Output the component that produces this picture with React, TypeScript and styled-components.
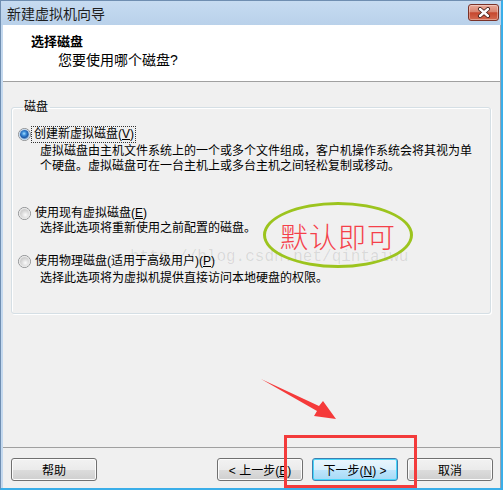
import styled, { createGlobalStyle } from 'styled-components';

const GlobalStyle = createGlobalStyle`
  html, body {
    margin: 0;
    padding: 0;
    background: #f0f0f0;
  }
  body {
    font-family: "Liberation Sans", "Noto Sans CJK SC", sans-serif;
    font-size: 12px;
    color: #000;
  }
`;

const CJK = `"Liberation Sans", "Noto Sans CJK SC", sans-serif`;

const Window = styled.div`
  position: relative;
  width: 503px;
  height: 490px;
  box-sizing: border-box;
  display: flex;
  flex-direction: column;
  background: #c4d9ef;
  border-left: 1px solid #6f8eb1;
  border-top: 1px solid #6f8eb1;
  border-right: 2px solid #3aaee9;
  border-bottom: 2px solid #3aaee9;
  overflow: hidden;
`;

const TitleBar = styled.div`
  height: 24px;
  flex-shrink: 0;
  display: flex;
  align-items: center;
  padding-left: 6px;
  background: linear-gradient(to bottom, #c6dbf1 0%, #b9d1ea 100%);
`;

const TitleText = styled.span`
  font-family: ${CJK};
  font-size: 14px;
  color: #1e1e1e;
`;

const CloseButton = styled.div`
  width: 31px;
  height: 17px;
  margin: 3px 2px 0 auto;
  align-self: flex-start;
  box-sizing: border-box;
  border: 1px solid #7a3228;
  border-radius: 3px;
  background: linear-gradient(to bottom, #e9a998 0%, #d88470 45%, #c6472f 52%, #d36a50 100%);
  box-shadow: inset 0 0 0 1px rgba(255, 255, 255, 0.35);
  display: flex;
  align-items: center;
  justify-content: center;
`;

const Client = styled.div`
  flex: 1;
  display: flex;
  flex-direction: column;
  margin: 0 0 0 2px;
  background: #f0f0f0;
  border-right: 1px solid #9aa6b2;
`;

const Header = styled.div`
  height: 57px;
  flex-shrink: 0;
  box-sizing: border-box;
  background: #fff;
  border-bottom: 1px solid #a0a0a0;
  padding: 9px 0 0 28px;
  display: flex;
  flex-direction: column;
`;

const HeaderTitle = styled.div`
  font-family: ${CJK};
  font-size: 13px;
  font-weight: bold;
  line-height: 16px;
`;

const HeaderSub = styled.div`
  font-family: ${CJK};
  font-size: 14px;
  line-height: 18px;
  margin: 1px 0 0 27px;
`;

const Body = styled.div`
  flex: 1;
  display: flex;
  flex-direction: column;
`;

const GroupBox = styled.fieldset`
  margin: 17px 9px 0 8px;
  padding: 0 0 0 6px;
  height: 215px;
  box-sizing: border-box;
  min-width: 0;
  border: 1px solid #d5dfe5;
  border-radius: 3px;
  box-shadow: inset 1px 1px 0 #fff, 1px 1px 0 #fff;
`;

const Legend = styled.legend`
  margin-left: 5px;
  padding: 0 2px 0 1px;
  font-family: ${CJK};
  font-size: 12px;
  line-height: 16px;
`;

const Option = styled.div<{ $top: number }>`
  display: flex;
  flex-direction: column;
  margin-top: ${(p) => p.$top}px;
`;

const RadioRow = styled.div`
  display: flex;
  align-items: center;
  height: 16px;
`;

const Radio = styled.span<{ $checked?: boolean }>`
  position: relative;
  width: 13px;
  height: 13px;
  flex-shrink: 0;
  box-sizing: border-box;
  border-radius: 50%;
  border: 1px solid #8c8e90;
  background: #f4f4f4;
  &::after {
    content: '';
    position: absolute;
    left: 1px;
    top: 1px;
    width: 9px;
    height: 9px;
    border-radius: 50%;
    background: ${(p) =>
      p.$checked
        ? 'radial-gradient(circle at 45% 40%, #a8e0ff 0, #3d8fdc 2px, #1d5aa8 4px, #5c8fc6 5px)'
        : 'radial-gradient(circle at 60% 65%, #fbfbfb 0, #e0e0e0 3px, #cfcfcf 5px)'};
    box-shadow: ${(p) => (p.$checked ? '0 0 0 1px #bcd4ec' : '0 0 0 1px #e7e7e7')};
  }
`;

const RadioLabel = styled.span<{ $focused?: boolean }>`
  margin-left: ${(p) => (p.$focused ? '1px' : '4px')};
  padding: ${(p) => (p.$focused ? '0 1px 0 2px' : '0')};
  font-family: ${CJK};
  font-size: 12px;
  line-height: 15px;
  white-space: nowrap;
  outline: ${(p) => (p.$focused ? '1px dotted #333' : 'none')};
  outline-offset: 0;
`;

const Key = styled.span`
  text-decoration: underline;
`;

const Description = styled.div<{ $gap: number }>`
  margin: ${(p) => p.$gap}px 0 0 22px;
  font-family: ${CJK};
  font-size: 12px;
  line-height: 15px;
  white-space: nowrap;
`;

const Footer = styled.div`
  flex-shrink: 0;
  height: 41px;
  box-sizing: border-box;
  border-top: 1px solid #a0a0a0;
  padding: 10px 7px 0 8px;
  display: flex;
  align-items: flex-start;
  gap: 9px;
`;

const Spacer = styled.div`
  flex: 1;
`;

const Button = styled.button<{ $default?: boolean }>`
  width: 86px;
  height: 23px;
  box-sizing: border-box;
  padding: 0;
  border: 1px solid ${(p) => (p.$default ? '#3c7fb1' : '#707070')};
  border-radius: 3px;
  background: ${(p) =>
    p.$default
      ? 'linear-gradient(to bottom, #eaf6fd 0%, #d9f0fc 50%, #bee6fd 50%, #a7d9f5 100%)'
      : 'linear-gradient(to bottom, #f2f2f2 0%, #ebebeb 50%, #dddddd 50%, #cfcfcf 100%)'};
  box-shadow: inset 0 0 0 1px ${(p) => (p.$default ? '#48d7fb' : '#fcfcfc')};
  font-family: ${CJK};
  font-size: 12px;
  color: #000;
`;

const Watermark = styled.div`
  position: absolute;
  left: 129px;
  top: 247px;
  font-family: "Liberation Mono", monospace;
  font-size: 16px;
  line-height: 18px;
  color: rgba(0, 0, 0, 0.1);
  pointer-events: none;
`;

const Stamp = styled.div`
  position: absolute;
  left: 262px;
  top: 201px;
  width: 150px;
  height: 66px;
  box-sizing: border-box;
  border: 3px solid #9cc41e;
  border-radius: 50%;
  display: flex;
  align-items: center;
  justify-content: center;
  padding-top: 1px;
`;

const StampText = styled.span`
  font-family: "Noto Sans CJK SC", sans-serif;
  font-size: 28px;
  font-weight: 300;
  line-height: 30px;
  color: #f5404a;
  letter-spacing: 1px;
`;

const Arrow = styled.svg`
  position: absolute;
  left: 258px;
  top: 376px;
`;

const Highlight = styled.div`
  position: absolute;
  left: 283px;
  top: 434px;
  width: 133px;
  height: 53px;
  box-sizing: border-box;
  border: 3px solid #f33b3b;
`;

const App = () => {
  return (
    <>
      <GlobalStyle />
      <Window>
        <TitleBar>
          <TitleText>新建虚拟机向导</TitleText>
          <CloseButton>
            <svg width="14" height="11" viewBox="0 0 14 11">
              <path d="M3 2 L11 9 M11 2 L3 9" stroke="#3d1a14" strokeWidth="4" strokeLinecap="round" />
              <path d="M3 2 L11 9 M11 2 L3 9" stroke="#fff" strokeWidth="2.4" strokeLinecap="round" />
            </svg>
          </CloseButton>
        </TitleBar>
        <Client>
          <Header>
            <HeaderTitle>选择磁盘</HeaderTitle>
            <HeaderSub>您要使用哪个磁盘?</HeaderSub>
          </Header>
          <Body>
            <GroupBox>
              <Legend>磁盘</Legend>
              <Option $top={11}>
                <RadioRow>
                  <Radio $checked />
                  <RadioLabel $focused>
                    创建新虚拟磁盘(<Key>V</Key>)
                  </RadioLabel>
                </RadioRow>
                <Description $gap={2}>
                  虚拟磁盘由主机文件系统上的一个或多个文件组成，客户机操作系统会将其视为单
                  <br />
                  个硬盘。虚拟磁盘可在一台主机上或多台主机之间轻松复制或移动。
                </Description>
              </Option>
              <Option $top={31}>
                <RadioRow>
                  <Radio />
                  <RadioLabel>
                    使用现有虚拟磁盘(<Key>E</Key>)
                  </RadioLabel>
                </RadioRow>
                <Description $gap={0}>选择此选项将重新使用之前配置的磁盘。</Description>
              </Option>
              <Option $top={17}>
                <RadioRow>
                  <Radio />
                  <RadioLabel>
                    使用物理磁盘(适用于高级用户)(<Key>P</Key>)
                  </RadioLabel>
                </RadioRow>
                <Description $gap={2}>选择此选项将为虚拟机提供直接访问本地硬盘的权限。</Description>
              </Option>
            </GroupBox>
          </Body>
          <Footer>
            <Button>帮助</Button>
            <Spacer />
            <Button>&lt; 上一步(<Key>B</Key>)</Button>
            <Button $default>
              下一步(<Key>N</Key>) &gt;
            </Button>
            <Button>取消</Button>
          </Footer>
        </Client>
        <Watermark>http://blog.csdn.net/qintaiwu</Watermark>
        <Stamp>
          <StampText>默认即可</StampText>
        </Stamp>
        <Arrow width="82" height="46" viewBox="0 0 82 46">
          <polygon points="2,2 60,29 64,24 77,42 55,39 58,34" fill="#f53a3a" />
        </Arrow>
        <Highlight />
      </Window>
    </>
  );
};

export default App;
